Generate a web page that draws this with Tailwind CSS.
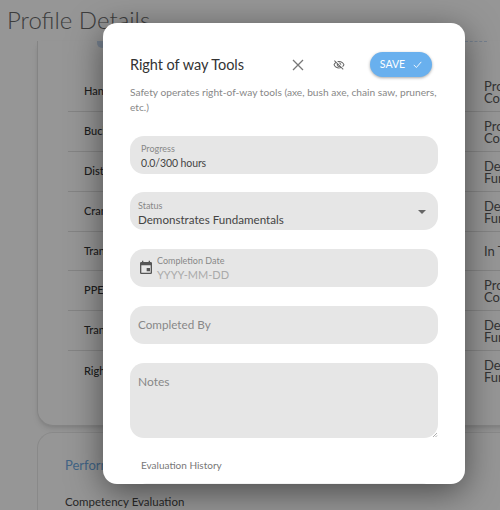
<!DOCTYPE html>
<html lang="en">
  <head>
    <meta charset="UTF-8" />
    <meta name="viewport" content="width=device-width, initial-scale=1.0" />
    <script src="https://cdn.jsdelivr.net/npm/@tailwindcss/browser@4"></script>
    <title>Profile Details</title>
  </head>
  <body class="font-['Lato','Noto_Sans',sans-serif]">
    <div class="relative w-[500px] h-[510px] overflow-hidden bg-[#fafafa]">
      <!-- page behind the dialog -->
      <h1 class="pl-[7px] pt-[5px] h-[41px] text-[24px] leading-[30px] font-light text-[#666]">Profile Details</h1>
      <div class="ml-[37px] w-[600px] h-[385px] rounded-bl-2xl border-l border-b border-[#ddd] shadow-md bg-[#fbfbfb] pl-[30px]">
        <div class="relative h-[31px]">
          <div class="absolute left-[29px] top-0 w-[10px] h-[7px] rounded-b-full bg-[#c5d8ee]"></div>
          <div class="absolute left-[397px] top-0 w-[22px] border-t border-dashed border-[#c5d8ee]"></div>
        </div>
        <ul class="text-[11px] text-[#333]">
          <li class="flex items-center h-[40px] border-b border-[#ddd]"><span class="w-[16px]"></span><span class="w-[400px] font-medium">Hand Tools</span><span class="text-[13px] leading-[12px] text-[#555]">Proficient<br />Competent</span></li>
          <li class="flex items-center h-[40px] border-b border-[#ddd]"><span class="w-[16px]"></span><span class="w-[400px] font-medium">Bucket</span><span class="text-[13px] leading-[12px] text-[#555]">Proficient<br />Competent</span></li>
          <li class="flex items-center h-[40px] border-b border-[#ddd]"><span class="w-[16px]"></span><span class="w-[400px] font-medium">Distribution</span><span class="text-[13px] leading-[12px] text-[#555]">Demonstrates<br />Fundamentals</span></li>
          <li class="flex items-center h-[40px] border-b border-[#ddd]"><span class="w-[16px]"></span><span class="w-[400px] font-medium">Crane</span><span class="text-[13px] leading-[12px] text-[#555]">Demonstrates<br />Fundamentals</span></li>
          <li class="flex items-center h-[39px] border-b border-[#ddd]"><span class="w-[16px]"></span><span class="w-[400px] font-medium">Transformers</span><span class="text-[13px] leading-[12px] text-[#555]">In Training</span></li>
          <li class="flex items-center h-[40px] border-b border-[#ddd]"><span class="w-[16px]"></span><span class="w-[400px] font-medium">PPE</span><span class="text-[13px] leading-[12px] text-[#555]">Proficient<br />Competent</span></li>
          <li class="flex items-center h-[40px] border-b border-[#ddd]"><span class="w-[16px]"></span><span class="w-[400px] font-medium">Transmission</span><span class="text-[13px] leading-[12px] text-[#555]">Demonstrates<br />Fundamentals</span></li>
          <li class="flex items-center h-[40px]"><span class="w-[16px]"></span><span class="w-[400px] font-medium">Right of way Tools</span><span class="text-[13px] leading-[12px] text-[#555]">Demonstrates<br />Fundamentals</span></li>
        </ul>
      </div>
      <div class="mt-[6px] ml-[37px] w-[600px] h-[90px] rounded-tl-2xl border-l border-t border-[#e5e5e5] bg-[#fbfbfb] pl-[27px] pt-[24px]">
        <p class="text-[13px] leading-[16px] text-[#6ea8e0]">Performance</p>
        <p class="mt-[21px] text-[11.500px] leading-[16px] text-[#444]">Competency Evaluation</p>
      </div>

      <!-- overlay -->
      <div class="absolute inset-0 bg-black/40"></div>

      <!-- dialog -->
      <div class="absolute left-[103px] top-[23px] w-[362px] h-[461px] overflow-hidden rounded-[14px] bg-white shadow-[0_8px_34px_rgba(0,0,0,0.5)] px-[27px] pt-[28px]">
        <div class="flex items-center h-[27px]">
          <h2 class="flex-1 text-[14.500px] tracking-[-0.05px] text-[#333]">Right of way Tools</h2>
          <button class="w-[16px] h-[16px] text-[#777] mr-[27px]">
            <svg viewBox="0 0 16 16" class="w-[16px] h-[16px]" fill="none" stroke="currentColor" stroke-width="1.3"><path d="M3 3l10 10M13 3L3 13" /></svg>
          </button>
          <button class="w-[12px] h-[12px] text-[#666] mr-[25px]">
            <svg viewBox="0 0 24 24" class="w-[12px] h-[12px]" fill="currentColor"><path d="M12 6c3.790 0 7.170 2.130 8.820 5.500-.59 1.220-1.420 2.270-2.410 3.120l1.410 1.410c1.390-1.230 2.490-2.770 3.180-4.530C21.270 7.110 17 4 12 4c-1.270 0-2.490.2-3.640.57l1.650 1.650C10.660 6.090 11.320 6 12 6zm-1.070 1.140L13 9.210c.57.25 1.030.71 1.280 1.280l2.070 2.070c.08-.34.14-.7.14-1.070C16.500 9.010 14.480 7 12 7c-.37 0-.72.05-1.070.14zM2.010 3.870l2.680 2.680C3.060 7.830 1.780 9.530 1 11.500 2.730 15.890 7 19 12 19c1.520 0 2.980-.29 4.320-.82l3.420 3.420 1.410-1.410L3.420 2.450 2.010 3.870zm7.500 7.500l2.610 2.610c-.04.01-.08.02-.12.02-1.380 0-2.500-1.120-2.500-2.500 0-.05.01-.08.01-.13zm-3.400-3.400l1.750 1.750c-.23.55-.36 1.150-.36 1.780 0 2.480 2.020 4.500 4.500 4.500.63 0 1.230-.13 1.770-.36l.98.98c-.88.24-1.800.38-2.750.38-3.790 0-7.170-2.130-8.820-5.500.7-1.430 1.720-2.610 2.930-3.530z" /></svg>
          </button>
          <button class="flex items-center justify-center gap-[8px] w-[62px] h-[25px] mr-[6px] rounded-full bg-[#69b0ee] text-[10.500px] text-white shadow-[0_1px_3px_rgba(0,0,0,0.35)]">
            SAVE
            <svg viewBox="0 0 12 12" class="w-[9px] h-[9px]" fill="none" stroke="currentColor" stroke-width="1.2"><path d="M1 6.500l3.500 3.500L11 2.500" /></svg>
          </button>
        </div>
        <p class="mt-[7px] text-[10.200px] leading-[15px] text-[#888]">Safety operates right-of-way tools (axe, bush axe, chain saw, pruners, etc.)</p>

        <div class="mt-[21px] w-[308px] h-[38px] rounded-[14px] bg-[#e6e6e6] pl-[11px] pt-[7px]">
          <p class="text-[9px] leading-[11px] text-[#888]">Progress</p>
          <p class="mt-[3px] text-[10.500px] leading-[13px] tracking-[-0.1px] text-[#444]">0.0/300 hours</p>
        </div>

        <div class="relative mt-[18px] w-[308px] h-[38px] rounded-[14px] bg-[#e6e6e6] pl-[8px] pt-[8px]">
          <p class="text-[9px] leading-[11px] text-[#888]">Status</p>
          <p class="mt-[2px] text-[11.600px] leading-[14px] text-[#444]">Demonstrates Fundamentals</p>
          <div class="absolute right-[12px] top-[18px] w-0 h-0 border-x-[4px] border-t-[4px] border-x-transparent border-t-[#666]"></div>
        </div>

        <div class="flex items-center mt-[19px] w-[308px] h-[38px] rounded-[14px] bg-[#e6e6e6] pl-[8px]">
          <svg viewBox="0 0 24 24" class="w-[16px] h-[16px] text-[#555]" fill="currentColor"><path d="M19 3h-1V1h-2v2H8V1H6v2H5a2 2 0 0 0-2 2v14a2 2 0 0 0 2 2h14a2 2 0 0 0 2-2V5a2 2 0 0 0-2-2zm0 16H5V8h14v11zM13 12h5v5h-5z" /></svg>
          <div class="ml-[3px]">
            <p class="text-[9px] leading-[11px] text-[#888]">Completion Date</p>
            <p class="mt-[2px] text-[11px] leading-[14px] text-[#aaa]">YYYY-MM-DD</p>
          </div>
        </div>

        <div class="flex items-center mt-[19px] w-[308px] h-[38px] rounded-[14px] bg-[#e6e6e6] pl-[8px] text-[11.700px] text-[#888]">Completed By</div>

        <div class="relative mt-[19px] w-[308px] h-[75px] rounded-[14px] bg-[#e6e6e6] pl-[8px] pt-[11px] text-[12px] leading-[16px] text-[#888]">
          Notes
          <svg viewBox="0 0 6 6" class="absolute right-0 bottom-0 w-[6px] h-[6px] text-[#777]" fill="none" stroke="currentColor" stroke-width="0.6"><path d="M1 5l4-4M3.500 5L5 3.500" /></svg>
        </div>

        <p class="mt-[21px] pl-[11px] text-[10px] leading-[12px] text-[#777]">Evaluation History</p>
        <div class="mt-[12px] ml-[7px] w-[295px] h-[10px] rounded-t-[14px] bg-[#f2f2f2]"></div>
      </div>
    </div>
  </body>
</html>
